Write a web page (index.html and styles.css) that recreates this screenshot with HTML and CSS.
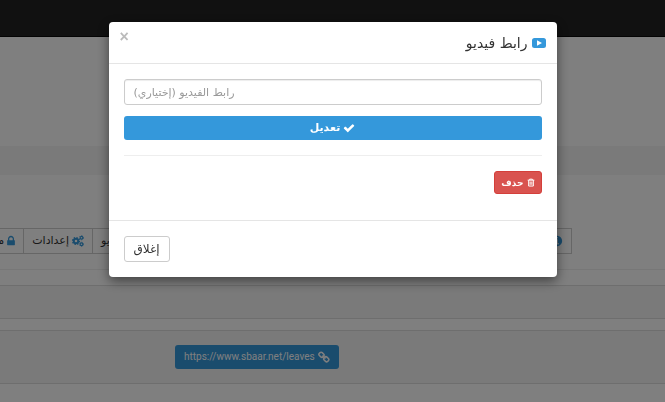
FILE: index.html
```html
<!DOCTYPE html>
<html lang="ar" dir="rtl">
  <head>
    <meta charset="UTF-8" />
    <meta name="viewport" content="width=device-width, initial-scale=1.0" />
    <title>رابط فيديو</title>
    <link rel="stylesheet" href="styles.css">
  </head>
  <body>
    <header class="navbar"></header>
    <main class="page">
      <div class="banner"></div>
      <div class="strip"></div>

      <!-- Tabs -->
      <nav class="tabs">
        <div class="tabs-main">
          <a class="tab tab-wide" href="#info">
            <svg class="icon" viewBox="0 0 1792 1792"><path d="M1152 1376v-160q0-14-9-23t-23-9h-96v-512q0-14-9-23t-23-9h-320q-14 0-23 9t-9 23v160q0 14 9 23t23 9h96v320h-96q-14 0-23 9t-9 23v160q0 14 9 23t23 9h448q14 0 23-9t9-23zm-128-896v-160q0-14-9-23t-23-9h-192q-14 0-23 9t-9 23v160q0 14 9 23t23 9h192q14 0 23-9t9-23zm640 416q0 209-103 385.5t-279.5 279.5-385.5 103-385.5-103-279.5-279.5-103-385.5 103-385.5 279.5-279.5 385.5-103 385.5 103 279.5 279.5 103 385.5z"/></svg>
            معلومات
          </a>
          <a class="tab" href="#video">فيديو</a>
        </div>
        <a class="tab" href="#settings">
          <svg class="icon" viewBox="0 0 24 24">
            <circle cx="8" cy="12" r="4.5" fill="none" stroke="currentColor" stroke-width="4"/>
            <circle cx="8" cy="12" r="7" fill="none" stroke="currentColor" stroke-width="2.5" stroke-dasharray="2.75"/>
            <circle cx="19" cy="5.5" r="2.7" fill="none" stroke="currentColor" stroke-width="2.2"/>
            <circle cx="19" cy="5.5" r="4.2" fill="none" stroke="currentColor" stroke-width="1.5" stroke-dasharray="2.2"/>
            <circle cx="19" cy="18.5" r="2.7" fill="none" stroke="currentColor" stroke-width="2.2"/>
            <circle cx="19" cy="18.5" r="4.2" fill="none" stroke="currentColor" stroke-width="1.5" stroke-dasharray="2.2"/>
          </svg>
          إعدادات
        </a>
        <a class="tab" href="#lock">
          <svg class="icon icon-lock" viewBox="320 0 1152 1792"><path d="M640 768h512v-192q0-106-75-181t-181-75-181 75-75 181v192zm832 96v576q0 40-28 68t-68 28h-960q-40 0-68-28t-28-68v-576q0-40 28-68t68-28h32v-192q0-184 132-316t316-132 316 132 132 316v192h32q40 0 68 28t28 68z"/></svg>
          مغلق
        </a>
      </nav>

      <div class="panel-heading"></div>
      <div class="link-row">
        <a class="btn btn-primary btn-link" href="https://www.sbaar.net/leaves">
          <svg class="icon" viewBox="0 0 24 24" fill="none" stroke="currentColor" stroke-width="3">
            <rect x="2" y="3.5" width="10" height="8" rx="3" transform="rotate(45 7 7.5)"/>
            <rect x="11.5" y="12.500" width="10" height="8" rx="3" transform="rotate(45 16.5 16.5)"/>
            <path d="M9 9l6 6"/>
          </svg>
          <bdi>https://www.sbaar.net/leaves</bdi>
        </a>
      </div>
    </main>

    <!-- Video link dialog -->
    <div class="backdrop">
      <div class="modal" role="dialog" aria-labelledby="modalTitle">
        <div class="modal-header">
          <h4 class="modal-title" id="modalTitle">
            <svg class="icon-video" viewBox="0 0 14 10"><path fill-rule="evenodd" d="M2.5 0h9Q14 0 14 2.5v5Q14 10 11.5 10h-9Q0 10 0 7.5v-5Q0 0 2.5 0zM5 2.3v5.4L10 5z"/></svg>
            رابط فيديو
          </h4>
          <button type="button" class="close" aria-label="إغلاق">×</button>
        </div>
        <form class="modal-body">
          <input type="text" class="form-control" aria-label="رابط الفيديو" placeholder="رابط الفيديو (إختياري)" />
          <button type="submit" class="btn btn-primary btn-block">
            <svg class="icon" viewBox="0 0 1792 1792"><path d="M1671 566q0 40-28 68l-724 724-136 136q-28 28-68 28t-68-28l-136-136-362-362q-28-28-28-68t28-68l136-136q28-28 68-28t68 28l294 295 656-657q28-28 68-28t68 28l136 136q28 28 28 68z"/></svg>
            تعديل
          </button>
          <hr />
          <button type="button" class="btn btn-danger">
            <svg class="icon-trash" viewBox="0 0 12 12" fill="none" stroke="currentColor" stroke-width="1.5"><path d="M1 2.5h10M4 2.5V1h4v1.5M2.5 2.5v8.8h7V2.5M4.7 4.5v5M7.3 4.5v5"/></svg>
            حذف
          </button>
        </form>
        <div class="modal-footer">
          <button type="button" class="btn btn-default">إغلاق</button>
        </div>
      </div>
    </div>
  </body>
</html>
```
FILE: styles.css
```css
* {
  box-sizing: border-box;
}
body {
  margin: 0;
  overflow: hidden;
  background-color: #fff;
  color: #333;
  font-family: "DejaVu Sans", sans-serif;
  font-size: 11px;
  line-height: 16px;
}
button,
input {
  font-family: inherit;
}
.icon {
  width: 12px;
  height: 12px;
  flex-shrink: 0;
  fill: currentColor;
}
.icon-lock {
  width: 8px;
}
.navbar {
  height: 37px;
  background-color: #222;
  border-bottom: 1px solid #080808;
}
.banner {
  height: 109px;
}
.strip {
  height: 29px;
  background-color: #f5f5f5;
}
.tabs {
  display: flex;
  margin-top: 53px;
  padding-right: 93px;
  padding-bottom: 15px;
  border-bottom: 1px solid #eee;
  overflow: hidden;
}
.tabs-main {
  display: flex;
  flex: 0 0 480px;
}
.tab {
  display: flex;
  flex-shrink: 0;
  align-items: center;
  gap: 3px;
  height: 26px;
  padding: 0 8px;
  border: 1px solid #ccc;
  border-right-width: 0;
  color: #333;
  text-decoration: none;
}
.tab-wide {
  flex-grow: 1;
  border-right-width: 1px;
}
.tab .icon {
  color: #3498db;
}
.panel-heading {
  height: 34px;
  margin-top: 15px;
  background-color: #f5f5f5;
  border: 1px solid #ddd;
  border-width: 1px 0;
}
.link-row {
  display: flex;
  justify-content: flex-end;
  margin-top: 11px;
  padding: 14px 0 14px 175px;
  background-color: #f5f5f5;
  border: 1px solid #ddd;
  border-width: 1px 0;
}
.btn {
  display: flex;
  align-items: center;
  justify-content: center;
  gap: 3px;
  height: 24px;
  padding: 0 9px;
  border: 0;
  border-radius: 3px;
  font-size: 11px;
  line-height: 16px;
  cursor: pointer;
}
.btn-primary {
  background-color: #3498db;
  color: #fff;
  font-weight: bold;
}
.btn-link {
  font-family: Roboto, Arial, sans-serif;
  font-size: 10px;
  font-weight: normal;
  text-decoration: none;
}
.btn-link .icon {
  fill: none;
}
.btn-block {
  width: 100%;
  margin-top: 11px;
}
.btn-danger {
  height: 23px;
  padding: 0 6px;
  background-color: #d9534f;
  border: 1px solid #d43f3a;
  color: #fff;
  font-size: 9px;
  font-weight: bold;
}
.btn-default {
  height: 26px;
  background-color: #fff;
  border: 1px solid #ccc;
  color: #333;
  font-size: 12px;
}
.icon-trash {
  width: 8px;
  height: 9px;
}
.backdrop {
  position: fixed;
  inset: 0;
  padding: 22px 10px;
  background-color: rgba(0, 0, 0, 0.5);
}
.modal {
  max-width: 448px;
  margin: 0 auto;
  background-color: #fff;
  border-radius: 4px;
  box-shadow: 0 4px 12px rgba(0, 0, 0, 0.5);
}
.modal-header {
  display: flex;
  align-items: flex-start;
  justify-content: space-between;
  padding: 11px 11px 10px;
  border-bottom: 1px solid #e5e5e5;
}
.modal-title {
  display: flex;
  align-items: center;
  gap: 4px;
  margin: 0;
  font-size: 14px;
  font-weight: normal;
  line-height: 20px;
}
.icon-video {
  width: 14px;
  height: 10px;
  fill: #3498db;
}
.close {
  padding: 0;
  border: 0;
  background: none;
  color: #bbb;
  font: bold 16px/8px "Liberation Sans", Arial, sans-serif;
  cursor: pointer;
}
.modal-body {
  padding: 15px 15px 26px;
}
.form-control {
  display: block;
  width: 100%;
  height: 26px;
  padding: 0 9px;
  border: 1px solid #ccc;
  border-radius: 3px;
  box-shadow: inset 0 1px 1px rgba(0, 0, 0, 0.075);
  direction: ltr;
  font-size: 11px;
}
.form-control::placeholder {
  color: #999;
}
hr {
  margin: 15px 0;
  border: 0;
  border-top: 1px solid #eee;
}
.modal-footer {
  display: flex;
  justify-content: flex-end;
  padding: 15px;
  border-top: 1px solid #e5e5e5;
}
```
